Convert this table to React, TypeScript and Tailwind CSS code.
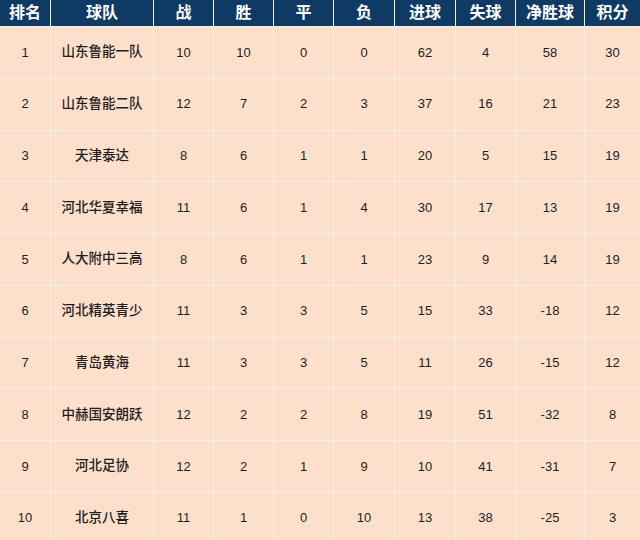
import React from "react";

const headers = ["排名", "球队", "战", "胜", "平", "负", "进球", "失球", "净胜球", "积分"];
const rows: (string | number)[][] = [
  [1, "山东鲁能一队", 10, 10, 0, 0, 62, 4, 58, 30],
  [2, "山东鲁能二队", 12, 7, 2, 3, 37, 16, 21, 23],
  [3, "天津泰达", 8, 6, 1, 1, 20, 5, 15, 19],
  [4, "河北华夏幸福", 11, 6, 1, 4, 30, 17, 13, 19],
  [5, "人大附中三高", 8, 6, 1, 1, 23, 9, 14, 19],
  [6, "河北精英青少", 11, 3, 3, 5, 15, 33, -18, 12],
  [7, "青岛黄海", 11, 3, 3, 5, 11, 26, -15, 12],
  [8, "中赫国安朗跃", 12, 2, 2, 8, 19, 51, -32, 8],
  [9, "河北足协", 12, 2, 1, 9, 10, 41, -31, 7],
  [10, "北京八喜", 11, 1, 0, 10, 13, 38, -25, 3],
];

export default function App() {
  return (
    <div className="w-[640px] h-[540px] overflow-hidden bg-white">
      <div
        className="grid gap-px bg-[#f6efe9] grid-cols-[50px_102px_59px_59px_59px_60px_60px_59px_68px_55px] grid-rows-[26px_repeat(10,50.75px)]"
        style={{ fontFamily: '"Liberation Sans", "Noto Sans CJK SC", sans-serif' }}
      >
        {headers.map((h) => (
          <div
            key={h}
            className="bg-[#0f3a63] text-white font-bold text-[16px] flex items-center justify-center"
          >
            {h}
          </div>
        ))}
        {rows.map((r, i) =>
          r.map((c, j) => (
            <div
              key={`${i}-${j}`}
              className={`bg-[#fde0cb] text-[#1e1e1e] font-medium flex items-center justify-center ${
                j === 1 ? "text-[13.5px]" : "text-[13px]"
              }`}
            >
              {c}
            </div>
          ))
        )}
      </div>
    </div>
  );
}
